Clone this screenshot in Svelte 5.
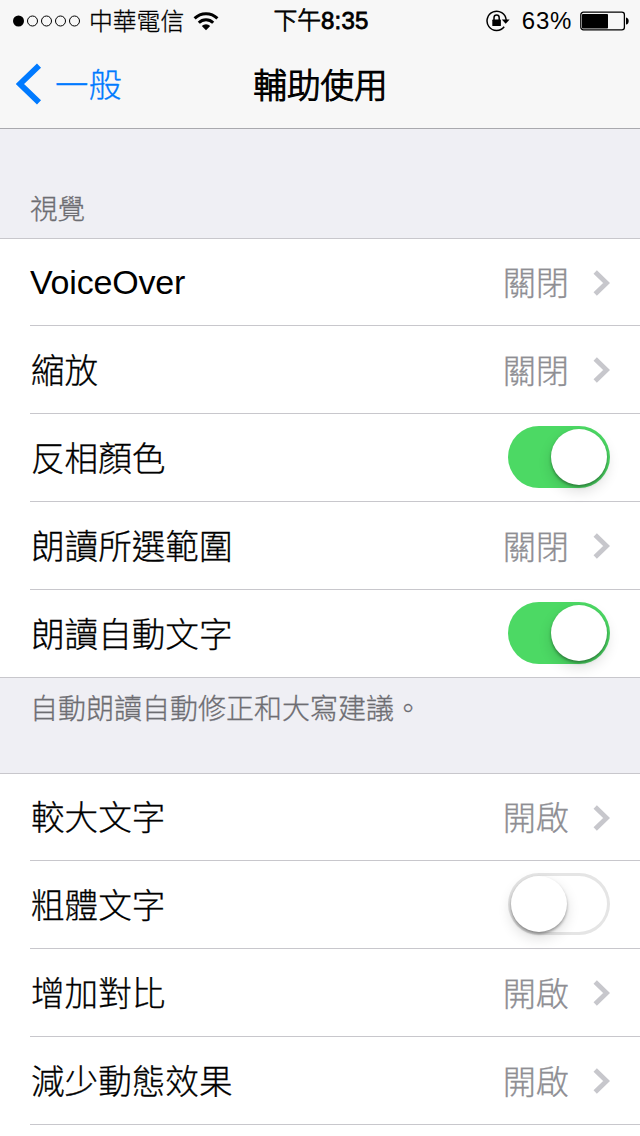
<script>
  let vision = [
    { label: "VoiceOver", value: "關閉", latin: true },
    { label: "縮放", value: "關閉" },
    { label: "反相顏色", toggle: true, on: true },
    { label: "朗讀所選範圍", value: "關閉" },
    { label: "朗讀自動文字", toggle: true, on: true },
  ];

  let display = [
    { label: "較大文字", value: "開啟" },
    { label: "粗體文字", toggle: true, on: false },
    { label: "增加對比", value: "開啟" },
    { label: "減少動態效果", value: "開啟" },
  ];
</script>

{#snippet row(item)}
  <div class="row">
    <span class="label" class:latin={item.latin}>{item.label}</span>
    {#if item.toggle}
      <button
        class="switch"
        class:on={item.on}
        role="switch"
        aria-checked={item.on}
        aria-label={item.label}
        onclick={() => (item.on = !item.on)}
      >
        <span class="knob"></span>
      </button>
    {:else}
      <span class="value">{item.value}</span>
      <svg class="chevron" width="17" height="26" viewBox="0 0 17 26">
        <path d="M2.2 2L13.6 13L2.2 24" fill="none" stroke="#c7c7cc" stroke-width="4.8" />
      </svg>
    {/if}
  </div>
{/snippet}

<div class="screen" lang="zh-Hant">
  <header>
    <div class="status">
      <div class="left">
        <svg width="69" height="12" viewBox="0 0 69 12">
          <circle cx="6.5" cy="6" r="5.5" />
          {#each [20.5, 34.5, 48.5, 62.5] as cx}
            <circle {cx} cy="6" r="5" fill="none" stroke="#000" stroke-width="1" />
          {/each}
        </svg>
        <span class="carrier">中華電信</span>
        <svg class="wifi" width="26" height="20" viewBox="0 0 26 20">
          <g fill="none" stroke="#000" stroke-width="3">
            <path d="M1.6 7.4A16.2 16.2 0 0 1 24.4 7.4" />
            <path d="M5.8 11.8A10.3 10.3 0 0 1 20.2 11.8" />
          </g>
          <path d="M8.8 15A6 6 0 0 1 17.2 15L13 19.2Z" />
        </svg>
      </div>
      <div class="time">下午<b>8:35</b></div>
      <div class="right">
        <svg width="24" height="22" viewBox="0 0 24 22">
          <path d="M18.2 16.8A9.6 9.6 0 1 1 20.2 10" fill="none" stroke="#000" stroke-width="1.5" />
          <path d="M15.8 9.6H23.6L19.7 13.8Z" />
          <rect x="6.3" y="9.6" width="8.6" height="6.4" rx="0.6" />
          <path d="M8 10V7.7A2.6 2.6 0 0 1 13.2 7.7V10" fill="none" stroke="#000" stroke-width="1.5" />
        </svg>
        <span class="percent">63%</span>
        <svg width="50" height="20" viewBox="0 0 50 20">
          <rect x="0.8" y="1.2" width="43.6" height="17.6" rx="2.6" fill="none" stroke="#000" stroke-width="1.3" />
          <rect x="2" y="3" width="26" height="14.6" rx="0.8" />
          <path d="M46 6.4Q48.7 7 48.7 10T46 13.6Z" />
        </svg>
      </div>
    </div>
    <nav>
      <a class="back" href="#general">
        <svg width="26" height="42" viewBox="0 0 26 42">
          <path d="M23 2.6L4 21L23 39.4" fill="none" stroke="#007aff" stroke-width="5.8" />
        </svg>
        <span>一般</span>
      </a>
      <h1>輔助使用</h1>
    </nav>
  </header>

  <h2>視覺</h2>
  <section>
    {#each vision as item}
      {@render row(item)}
    {/each}
  </section>
  <p class="note">自動朗讀自動修正和大寫建議。</p>

  <section class="open">
    {#each display as item}
      {@render row(item)}
    {/each}
  </section>
</div>

<style>
  :global(body) {
    overflow: hidden;
  }

  .screen {
    display: flex;
    flex-direction: column;
    height: 1136px;
    overflow: hidden;
    background: #efeff4;
    color: #000;
    font-family: "Liberation Sans", "Noto Sans CJK TC", sans-serif;
    font-weight: 300;
    -webkit-text-stroke: 0.3px currentColor;
  }

  header {
    box-sizing: border-box;
    height: 129px;
    flex-shrink: 0;
    background: #f7f7f7;
    border-bottom: 1px solid #a9a9ae;
  }

  .status {
    display: grid;
    grid-template-columns: 1fr auto 1fr;
    align-items: center;
    height: 40px;
    padding: 0 10px 0 12px;
    font-size: 23.8px;
    line-height: 40px;
  }

  .left,
  .right {
    display: flex;
    align-items: center;
  }

  .right {
    justify-content: flex-end;
  }

  .carrier {
    padding-top: 2px;
    margin: 0 9px 0 8px;
  }

  .time {
    -webkit-text-stroke: 0.8px #000;
  }

  .time b {
    font-size: 24px;
    font-weight: 400;
    letter-spacing: 0.2px;
    -webkit-text-stroke: 0.8px #000;
  }

  .percent {
    margin: 0 8px 0 12px;
    font-size: 24px;
    letter-spacing: 0.7px;
    -webkit-text-stroke: 0;
  }

  nav {
    display: grid;
    grid-template-columns: 1fr auto 1fr;
    align-items: center;
    height: 88px;
    padding: 0 16px;
  }

  .back {
    display: flex;
    align-items: center;
    gap: 13px;
    color: #007aff;
    font-size: 33.4px;
    line-height: 48px;
    text-decoration: none;
  }

  .back span {
    padding-top: 4px;
  }

  h1 {
    margin: 0;
    padding: 5px 0 0 1px;
    font-size: 33.6px;
    font-weight: 300;
    line-height: 48px;
    -webkit-text-stroke: 1.1px #000;
  }

  h2 {
    margin: 0;
    height: 28px;
    padding: 61px 30px 20px;
    font-size: 27.6px;
    font-weight: 300;
    line-height: 40px;
    color: #6d6d72;
  }

  section {
    background: #fff;
    border-top: 1px solid #c8c7cc;
    border-bottom: 1px solid #c8c7cc;
  }

  .row {
    display: flex;
    align-items: center;
    box-sizing: border-box;
    height: 88px;
    margin-left: 30px;
    padding-right: 30px;
    border-bottom: 1px solid #c8c7cc;
  }

  .row:first-child {
    height: 87px;
  }

  section:not(.open) .row:last-child {
    height: 87px;
    border-bottom: none;
  }

  .open {
    flex: 1;
    border-bottom: none;
  }

  .label {
    flex: 1;
    padding: 4px 0 0 1px;
    font-size: 33.6px;
    line-height: 50px;
  }

  .latin {
    padding: 0 0 1px;
    font-size: 34px;
    letter-spacing: -0.2px;
    -webkit-text-stroke: 0;
  }

  .value {
    padding-top: 4px;
    font-size: 33.2px;
    line-height: 50px;
    color: #8e8e93;
  }

  .chevron {
    margin: 1px 0 0 24px;
  }

  .switch {
    box-sizing: border-box;
    width: 102px;
    height: 62px;
    margin-bottom: 2px;
    padding: 3px;
    border: none;
    border-radius: 31px;
    background: #fff;
    box-shadow: inset 0 0 0 3px #e5e5e5;
  }

  .knob {
    display: block;
    width: 56px;
    height: 56px;
    border-radius: 50%;
    background: #fff;
    box-shadow:
      0 2px 3px rgba(0, 0, 0, 0.35),
      0 6px 14px rgba(0, 0, 0, 0.14);
  }

  .switch.on {
    background: #4cd964;
    box-shadow: none;
  }

  .on .knob {
    margin-left: 40px;
  }

  .note {
    margin: 0;
    height: 95px;
    box-sizing: border-box;
    padding: 12px 30px;
    font-size: 28px;
    line-height: 40px;
    color: #6d6d72;
  }
</style>
